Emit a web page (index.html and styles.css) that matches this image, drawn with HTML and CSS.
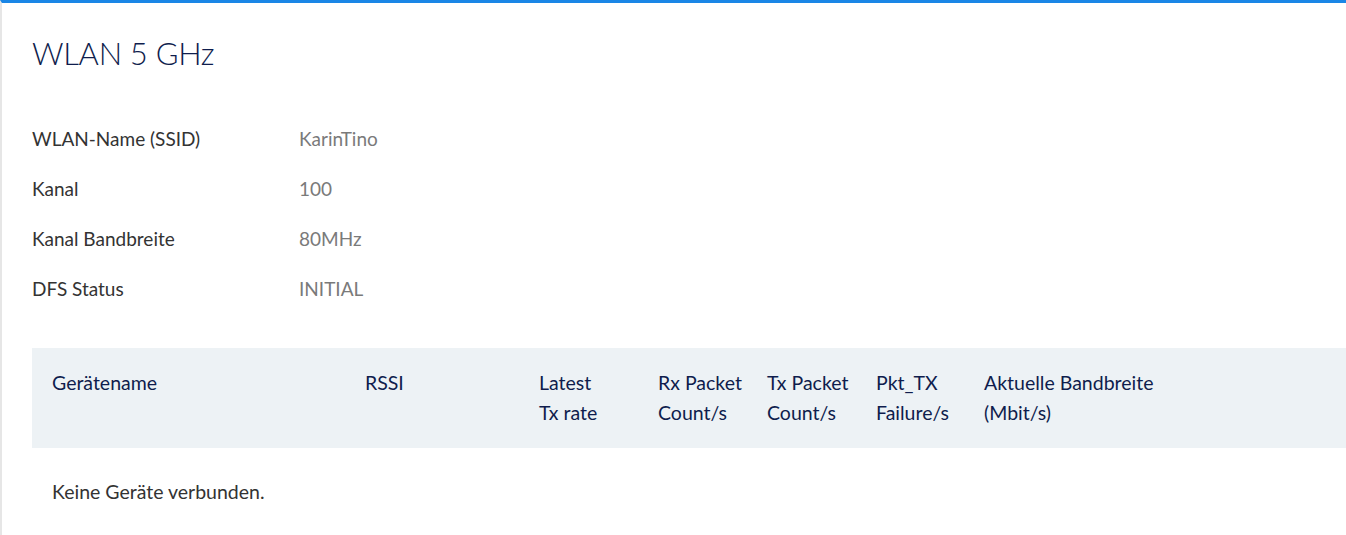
FILE: index.html
```html
<!DOCTYPE html>
<html lang="de">
<head>
  <meta charset="UTF-8">
  <meta name="viewport" content="width=device-width, initial-scale=1.0">
  <title>WLAN 5 GHz</title>
  <link rel="stylesheet" href="styles.css">
</head>
<body>
  <div class="panel">
    <h1 class="panel-title">WLAN 5 GHz</h1>

    <div class="info-list">
      <div class="info-row">
        <span class="info-label">WLAN-Name (SSID)</span>
        <span class="info-value">KarinTino</span>
      </div>
      <div class="info-row">
        <span class="info-label">Kanal</span>
        <span class="info-value">100</span>
      </div>
      <div class="info-row">
        <span class="info-label">Kanal Bandbreite</span>
        <span class="info-value">80MHz</span>
      </div>
      <div class="info-row">
        <span class="info-label">DFS Status</span>
        <span class="info-value">INITIAL</span>
      </div>
    </div>

    <table class="device-table">
      <colgroup>
        <col style="width: 333px">
        <col style="width: 174px">
        <col style="width: 119px">
        <col style="width: 109px">
        <col style="width: 109px">
        <col style="width: 108px">
        <col>
      </colgroup>
      <thead>
        <tr>
          <th>Gerätename</th>
          <th>RSSI</th>
          <th>Latest<br>Tx rate</th>
          <th>Rx Packet<br>Count/s</th>
          <th>Tx Packet<br>Count/s</th>
          <th>Pkt_TX<br>Failure/s</th>
          <th>Aktuelle Bandbreite<br>(Mbit/s)</th>
        </tr>
      </thead>
      <tbody>
        <tr>
          <td class="empty" colspan="7">Keine Geräte verbunden.</td>
        </tr>
      </tbody>
    </table>
  </div>
</body>
</html>
```

FILE: styles.css
```css
:root {
  --accent: #1a86e6;
  --navy: #0f1d4d;
  --text: #333333;
  --muted: #7a7a7a;
  --head-bg: #edf2f5;
}

* {
  margin: 0;
  padding: 0;
  box-sizing: border-box;
}

body {
  font-family: 'Lato', 'Open Sans', sans-serif;
  background-color: #ffffff;
  color: var(--text);
  min-height: 100vh;
  overflow: hidden;
}

/* Panel */
.panel {
  border-top: 3px solid var(--accent);
  border-left: 2px solid #e6e6e6;
  padding: 28px 0 0 30px;
  min-height: 100vh;
}

.panel-title {
  font-size: 31px;
  font-weight: 300;
  color: var(--navy);
  line-height: 44px;
  letter-spacing: -0.3px;
}

/* Info rows */
.info-list {
  margin-top: 38px;
}

.info-row {
  display: flex;
  align-items: center;
  height: 50px;
  font-size: 19px;
}

.info-label {
  width: 267px;
  color: var(--text);
}

.info-value {
  color: var(--muted);
}

/* Devices table */
.device-table {
  margin-top: 35px;
  width: 100%;
  border-collapse: collapse;
  table-layout: fixed;
  font-size: 19.5px;
}

.device-table th {
  background-color: var(--head-bg);
  color: var(--navy);
  font-weight: 400;
  text-align: left;
  vertical-align: top;
  line-height: 30px;
  padding: 20px 0;
}

.device-table th:first-child {
  padding-left: 20px;
}

.device-table td.empty {
  padding: 29px 20px;
  line-height: 30px;
  color: var(--text);
}
```
